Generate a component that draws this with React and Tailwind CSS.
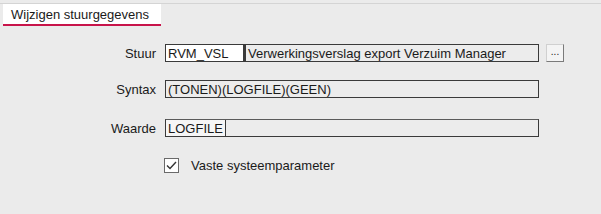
import React from 'react';

const font = { fontFamily: '"Liberation Sans", Arial, sans-serif' };

const Row = ({ label, children, className = '' }) => (
    <div className={`flex items-center h-[18px] ${className}`}>
        <div className="w-[165px] pr-[9px] text-right">{label}</div>
        {children}
    </div>
);

export default function App() {
    return (
        <div className="w-[601px] h-[214px] bg-[#ebebeb] text-[13px] text-[#1a1a1a] leading-none overflow-hidden" style={font}>
            {/* tab strip */}
            <div className="h-[4px] border-b border-[#d4d4d4]" />
            <div className="flex">
                <div className="ml-[3px] w-[158px] h-[22px] bg-white border-b-2 border-[#c8144a] flex items-center pl-[8px] text-[13px]">
                    Wijzigen stuurgegevens
                </div>
            </div>

            <div className="pt-[18px] flex flex-col">
                <Row label="Stuur">
                    <div className="w-[79px] h-[18px] bg-white border border-[#3a3a3a] flex items-center px-[2px]">RVM_VSL</div>
                    <div className="w-[295px] h-[18px] bg-[#ececec] border border-[#3a3a3a] border-l-2 flex items-center px-[2px]">
                        Verwerkingsverslag export Verzuim Manager
                    </div>
                    <button className="ml-[7px] w-[18px] h-[18px] bg-[#f4f4f4] border border-[#d0d0d0] border-r-[#7a7a7a] border-b-[#7a7a7a] text-[10px] leading-none flex items-end justify-center pb-[4px]">
                        ...
                    </button>
                </Row>
                <Row label="Syntax" className="mt-[18px]">
                    <div className="w-[374px] h-[18px] bg-[#ececec] border border-[#3a3a3a] flex items-center px-[2px]">
                        (TONEN)(LOGFILE)(GEEN)
                    </div>
                </Row>
                <Row label="Waarde" className="mt-[21px]">
                    <div className="w-[374px] h-[18px] bg-[#ececec] border border-[#3a3a3a] border-t-[#5a5a5a] flex items-center">
                        <span className="h-full bg-[#f6f6f6] border-r border-[#3a3a3a] flex items-center px-[2px]">LOGFILE</span>
                    </div>
                </Row>
            </div>

            <div className="mt-[21px] ml-[164px] flex items-center gap-[12px]">
                <div className="w-[15px] h-[15px] bg-white border border-[#6a6a6a] flex items-center justify-center">
                    <svg width="11" height="9" viewBox="0 0 11 9">
                        <path d="M1 4.5 L4 7.5 L10 1" fill="none" stroke="#333" strokeWidth="1.4" />
                    </svg>
                </div>
                <span>Vaste systeemparameter</span>
            </div>
        </div>
    );
}
